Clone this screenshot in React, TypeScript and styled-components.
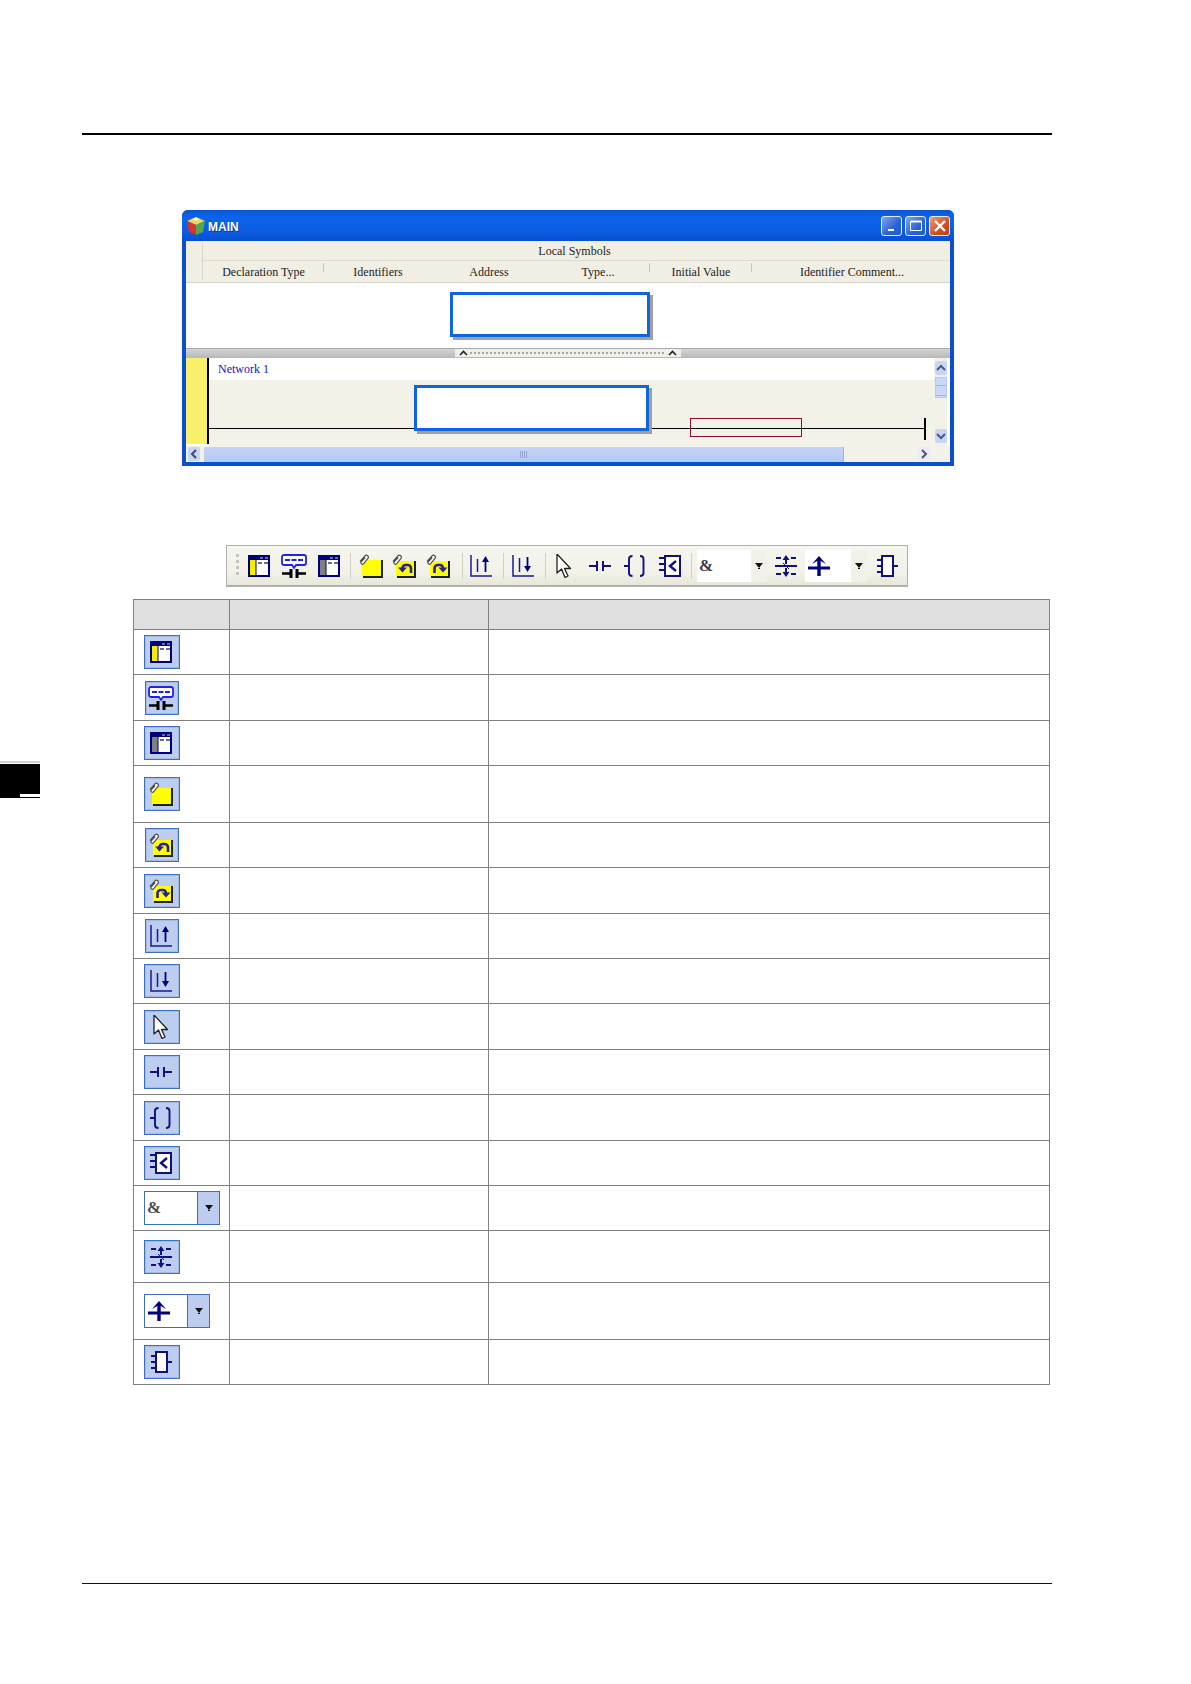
import React from "react";
import styled, { createGlobalStyle } from "styled-components";

const Global = createGlobalStyle`
  html, body { margin: 0; padding: 0; background: #fff; }
  body { font-family: "Liberation Serif", serif; }
`;

const Page = styled.div`
  position: relative;
  width: 1191px;
  height: 1684px;
  padding-top: 133px;
  box-sizing: border-box;
  overflow: hidden;
  background: #fff;
`;
const TopRule = styled.div`
  height: 2px;
  width: 970px;
  margin-left: 82px;
  background: #000;
`;
const BottomRule = styled.div`
  height: 1px;
  width: 970px;
  margin: 198px 0 0 82px;
  background: #111;
`;
const SideTab = styled.div`
  position: absolute;
  left: 0;
  top: 761px;
  width: 40px;
  height: 37px;
  box-sizing: border-box;
  border-top: 2px solid #d2d2d2;
  background: linear-gradient(#fff, #fff) no-repeat 0 0 / 100% 1px, #000;
  &::after {
    content: "";
    position: absolute;
    left: 20px;
    top: 31px;
    width: 20px;
    height: 3px;
    background: #fff;
  }
`;

/* window */
const Window = styled.section`
  position: relative;
  width: 772px;
  height: 256px;
  margin: 75px 0 0 182px;
  box-sizing: border-box;
  padding: 0 4px 4px;
  border-radius: 6px 6px 0 0;
  background: #0a4fd0;
  display: flex;
  flex-direction: column;
`;
const TitleBar = styled.div`
  height: 31px;
  margin: 0 -4px;
  padding: 0 4px 0 4px;
  flex: none;
  display: flex;
  align-items: center;
  gap: 2px;
  border-radius: 6px 6px 0 0;
  background: linear-gradient(#0a55d8 0, #0c64ea 25%, #0a5ce2 70%, #0650d0 100%);
`;
const TitleText = styled.span`
  flex: 1;
  padding-top: 2px;
  font: bold 12px "Liberation Sans", sans-serif;
  color: #fff;
  text-shadow: 1px 1px 0 #0a3a9c;
`;
const CapButton = styled.span<{ $close?: boolean }>`
  width: 21px;
  height: 20px;
  box-sizing: border-box;
  margin-left: 1px;
  display: flex;
  align-items: center;
  justify-content: center;
  border: 1px solid #e4ecfa;
  border-radius: 3px;
  background: ${(p) => (p.$close ? "linear-gradient(135deg,#e8a080,#d0501f 60%,#b8401a)" : "linear-gradient(135deg,#7fa8ee,#2a62d8 60%,#2358c8)")};
`;
const Header = styled.div`
  height: 42px;
  flex: none;
  background: #f1efe4;
  border-bottom: 1px solid #d4d2c8;
  box-sizing: border-box;
  display: grid;
  grid-template-rows: 20px 21px;
  padding-left: 17px;
  position: relative;
  &::before {
    content: "";
    position: absolute;
    left: 16px;
    top: 2px;
    bottom: 2px;
    width: 1px;
    background: #d8d6ca;
  }
`;
const SpanTitle = styled.div`
  display: flex;
  align-items: center;
  justify-content: center;
  padding: 2px 4px 0 0;
  font-size: 12px;
  color: #222;
  border-bottom: 1px solid #dedcd0;
`;
const Columns = styled.div`
  display: grid;
  grid-template-columns: 121px 108px 114px 104px 102px 190px;
`;
const Column = styled.div<{ $sep?: boolean; $shift?: number }>`
  display: flex;
  align-items: center;
  justify-content: center;
  padding-top: 2px;
  padding-left: ${(p) => p.$shift ?? 0}px;
  font-size: 12px;
  color: #222;
  position: relative;
  ${(p) =>
    p.$sep &&
    `&::after { content: ""; position: absolute; right: 0; top: 2px; height: 9px; width: 1px; background: #c9c7bb; }`}
`;
const UpperPane = styled.div`
  height: 65px;
  flex: none;
  background: #fff;
  border-bottom: 1px solid #a8a8a8;
`;
const Splitter = styled.div`
  height: 9px;
  flex: none;
  background: linear-gradient(#d4d4d4, #b8b8b8);
  padding-left: 269px;
`;
const SplitGrip = styled.div`
  width: 226px;
  height: 8px;
  background: #f0efe8;
  display: flex;
  align-items: center;
  justify-content: space-between;
  padding: 0 4px;
  box-sizing: border-box;
`;
const GripDots = styled.div`
  flex: 1;
  height: 2px;
  margin: 0 2px;
  background: repeating-linear-gradient(90deg, #a6a6a0 0 2px, transparent 2px 4px);
`;
const LowerPane = styled.div`
  height: 88px;
  flex: none;
  display: flex;
  background: #fff;
`;
const Gutter = styled.div`
  width: 21px;
  flex: none;
  background: #f8f06a;
  border-right: 2px solid #000;
  margin-bottom: 2px;
`;
const Ladder = styled.div`
  flex: 1;
  display: flex;
  flex-direction: column;
`;
const NetworkLabel = styled.div`
  height: 22px;
  flex: none;
  padding: 1px 0 0 9px;
  box-sizing: border-box;
  font-size: 12px;
  line-height: 21px;
  color: #1a10c0;
`;
const LadderBody = styled.div`
  flex: 1;
  background: #f3f2e9;
  position: relative;
`;
const Rung = styled.div`
  position: absolute;
  left: 0;
  top: 48px;
  width: 717px;
  height: 1px;
  background: #000;
  &::after {
    content: "";
    position: absolute;
    right: 0;
    top: -10px;
    width: 2px;
    height: 22px;
    background: #000;
  }
`;
const VScroll = styled.div`
  width: 13px;
  flex: none;
  margin-right: 3px;
  padding: 3px 0;
  background: #f3f2e9;
  display: flex;
  flex-direction: column;
  align-items: center;
`;
const ScrollBtn = styled.div<{ $plain?: boolean }>`
  width: 12px;
  height: 14px;
  display: flex;
  align-items: center;
  justify-content: center;
  background: ${(p) => (p.$plain ? "#ecebf0" : "#c6d6f4")};
  border-radius: 2px;
`;
const VThumb = styled.div`
  width: 12px;
  height: 21px;
  margin-top: 2px;
  box-sizing: border-box;
  border: 1px solid #b8caf0;
  background: repeating-linear-gradient(#c9d8f6 0 7px, #a0b4dc 7px 8px, #c9d8f6 8px 10px);
`;
const VSpace = styled.div`
  flex: 1;
`;
const HScroll = styled.div`
  flex: 1;
  display: flex;
  align-items: center;
  background: #f3f2e9;
  padding: 0 14px 0 2px;
`;
const HThumb = styled.div`
  width: 639px;
  height: 15px;
  margin: 0 74px 0 4px;
  background: linear-gradient(#c4d5f6, #b4c9f2);
  border-right: 1px solid #9fb4dc;
  display: flex;
  align-items: center;
  justify-content: center;
`;
const ThumbTicks = styled.span`
  width: 8px;
  height: 7px;
  background: repeating-linear-gradient(90deg, #8ea4cf 0 1px, transparent 1px 2px);
`;
const BlankBox = styled.div<{ $left: number; $top: number; $w: number; $h: number }>`
  position: absolute;
  left: ${(p) => p.$left}px;
  top: ${(p) => p.$top}px;
  width: ${(p) => p.$w}px;
  height: ${(p) => p.$h}px;
  box-sizing: border-box;
  border: 3px solid #0d66e0;
  background: #fff;
  box-shadow: 3px 3px 0 #a0a0a0;
`;
const RedFrame = styled.div`
  position: absolute;
  left: 508px;
  top: 208px;
  width: 112px;
  height: 19px;
  box-sizing: border-box;
  border: 1px solid #8e1028;
`;

/* toolbar */
const Toolbar = styled.div`
  width: 682px;
  height: 42px;
  margin: 79px 0 0 226px;
  box-sizing: border-box;
  border: 1px solid #b0b0b0;
  border-bottom-width: 2px;
  padding-left: 9px;
  background: linear-gradient(#f6f6f0, #f1f1e8 70%, #e6e6da);
  display: flex;
  align-items: center;
`;
const Grip = styled.div`
  width: 3px;
  height: 24px;
  background: repeating-linear-gradient(#c4c4bc 0 3px, transparent 3px 6px);
`;
const Tool = styled.span<{ $ml: number }>`
  width: 24px;
  height: 24px;
  flex: none;
  margin-left: ${(p) => p.$ml}px;
  display: flex;
  justify-content: center;
`;
const Sep = styled.span<{ $ml: number }>`
  width: 1px;
  height: 26px;
  flex: none;
  margin-left: ${(p) => p.$ml}px;
  background: #d0d0c6;
`;
const BarCombo = styled.div<{ $ml: number; $w: number }>`
  width: ${(p) => p.$w}px;
  height: 32px;
  flex: none;
  margin-left: ${(p) => p.$ml}px;
  display: flex;
  align-items: center;
  background: #fff;
`;
const ComboValue = styled.span`
  flex: 1;
  display: flex;
  align-items: center;
  padding-left: 2px;
  font: bold 17px "Liberation Serif", serif;
  color: #3c3c50;
`;
const BarArrow = styled.span`
  width: 16px;
  height: 100%;
  display: flex;
  align-items: center;
  justify-content: center;
  background: #f1f1e8;
`;

/* table */
const Table = styled.table`
  width: 916px;
  margin: 12px 0 0 133px;
  border-collapse: collapse;
  table-layout: fixed;
`;
const HeadCell = styled.th<{ $w: number }>`
  width: ${(p) => p.$w}px;
  height: 30px;
  padding: 0;
  box-sizing: border-box;
  background: #e0e0e0;
  border: 1px solid #808080;
`;
const Row = styled.tr<{ $h: number }>`
  height: ${(p) => p.$h}px;
`;
const Cell = styled.td`
  padding: 0;
  box-sizing: border-box;
  border: 1px solid #808080;
  vertical-align: middle;
`;
const IconCell = styled(Cell)`
  padding-left: 10px;
`;
const IconButton = styled.div<{ $narrow?: boolean }>`
  width: ${(p) => (p.$narrow ? 34 : 36)}px;
  height: 34px;
  margin-left: ${(p) => (p.$narrow ? 1 : 0)}px;
  padding-right: 2px;
  box-sizing: border-box;
  border: 1px solid #3d6fbe;
  box-shadow: inset 0 0 0 1px #a4bbe6;
  background: #bccdef;
  display: flex;
  align-items: center;
  justify-content: center;
`;
const TableCombo = styled.div<{ $w: number; $text: number }>`
  width: ${(p) => p.$w}px;
  height: 34px;
  box-sizing: border-box;
  border: 1px solid #3d6fbe;
  background: #bccdef;
  display: grid;
  grid-template-columns: ${(p) => p.$text}px 1fr;
`;
const TableComboValue = styled.span`
  display: flex;
  align-items: center;
  padding-left: 2px;
  background: #fff;
  border-right: 1px solid #3d6fbe;
  font: bold 17px "Liberation Serif", serif;
  color: #4a4a50;
`;
const TableArrow = styled.span`
  display: flex;
  align-items: center;
  justify-content: center;
`;

const NAVY = "#00007e";

const Svg = ({ children, size = 24 }: { children: React.ReactNode; size?: number }) => (
  <svg width={size} height="24" viewBox={`0 0 ${size} 24`} fill="none" style={{ flex: "none" }}>{children}</svg>
);

const Pane = ({ side }: { side: string }) => (
  <Svg>
    <rect x="2" y="2" width="20" height="20" fill="#fff" stroke={NAVY} strokeWidth="2" />
    <rect x="2" y="2" width="20" height="4" fill={NAVY} />
    <rect x="3" y="6" width="6" height="15" fill={side} />
    <path d="M9 6v15" stroke={NAVY} />
    <path d="M11 9h4M17 9h4" stroke="#6a6a9a" strokeWidth="2" />
    <path d="M13 4h3M18 4h3" stroke="#cfd4ee" />
  </Svg>
);
const Monitor = () => (
  <Svg size={26}>
    <path d="M3 1h20a2 2 0 0 1 2 2v6a2 2 0 0 1-2 2h-8l-2 3-2-3H3a2 2 0 0 1-2-2V3a2 2 0 0 1 2-2z" fill="#fff" stroke="#2222e6" strokeWidth="1.800" />
    <path d="M4 6h5M10.500 6h5M17 6h5" stroke="#2222e6" strokeWidth="2" />
    <path d="M1 19.500h8M17 19.500h8" stroke="#000" strokeWidth="2.400" />
    <path d="M10 15v9M16 15v9" stroke="#000" strokeWidth="3" />
  </Svg>
);
const Clip = () => (
  <path d="M1 7.500 6 1.800a2 2 0 0 1 3 2.600L4.500 9.800a1.500 1.500 0 0 1-2.300-1.900L6.200 3.500" stroke="#4e4e4e" strokeWidth="1.200" fill="#fff" />
);
const Note = () => (
  <Svg>
    <path d="M7 6h16v16H3V10z" fill="#ffff00" />
    <path d="M23 6v17H4" stroke="#202020" strokeWidth="2" />
    <Clip />
  </Svg>
);
const NoteUndo = () => (
  <Svg>
    <path d="M8 7h15v15H4V11z" fill="#ffff00" />
    <path d="M23 7v16H5" stroke="#202020" strokeWidth="2" />
    <Clip />
    <path d="M10.500 16.500V14a3 3 0 0 1 3-3h2a3.500 3.500 0 0 1 3.500 3.500V19" stroke="#26209a" strokeWidth="2.600" />
    <path d="M6 13.500 10.500 18.500l4.500-5z" fill="#26209a" />
  </Svg>
);
const NoteRedo = () => (
  <Svg>
    <path d="M8 7h15v15H4V11z" fill="#ffff00" />
    <path d="M23 7v16H5" stroke="#202020" strokeWidth="2" />
    <Clip />
    <path d="M8.500 19v-4.500A3.500 3.500 0 0 1 12 11h2a3 3 0 0 1 3 3v2.500" stroke="#26209a" strokeWidth="2.600" />
    <path d="M12.500 13.500 17 18.500l4.500-5z" fill="#26209a" />
  </Svg>
);
const Up = () => (
  <Svg>
    <path d="M2 1v21h21M8.500 5v13" stroke="#1a1a96" strokeWidth="1.500" />
    <path d="M16.500 7v11" stroke={NAVY} strokeWidth="1.800" />
    <path d="M13 8l3.500-6 3.500 6z" fill={NAVY} />
  </Svg>
);
const Down = () => (
  <Svg>
    <path d="M2 1v21h21M8.500 4v14" stroke="#1a1a96" strokeWidth="1.500" />
    <path d="M16.500 3v10" stroke={NAVY} strokeWidth="1.800" />
    <path d="M13 12l3.500 6 3.500-6z" fill={NAVY} />
  </Svg>
);
const Cursor = () => (
  <Svg>
    <path d="M5 0v19l4.500-4 3.500 8.500 3-1.500-3.500-7.500h6z" fill="#fff" stroke="#222" strokeWidth="1.300" strokeLinejoin="round" />
  </Svg>
);
const Contact = () => (
  <Svg>
    <path d="M1 12h8M15 12h8" stroke="#10107e" strokeWidth="2" />
    <path d="M9 7v10M15 7v10" stroke="#10107e" strokeWidth="2" />
  </Svg>
);
const Coil = () => (
  <Svg>
    <path d="M1 12h5M9.500 2C7 2 6 3 6 5v14c0 2 1 3 3.500 3M17 2c2.500 0 3.500 1 3.500 3v14c0 2-1 3-3.500 3" stroke="#10107e" strokeWidth="1.900" />
  </Svg>
);
const FuncBlock = () => (
  <Svg>
    <path d="M7 2h15v20H7z" fill="#fff" stroke="#10107e" strokeWidth="2" />
    <path d="M1 4h6M1 10h6M1 16h6" stroke="#10107e" strokeWidth="2" />
    <path d="M18 7l-6 5 6 5" stroke="#10107e" strokeWidth="2.400" />
  </Svg>
);
const Branch = () => (
  <Svg>
    <path d="M2 4h5M17 4h5M2 20h5M17 20h5M1 12h22" stroke="#10107e" strokeWidth="1.800" />
    <path d="M12 3v7M12 14v7" stroke="#10107e" strokeWidth="2" />
    <path d="M8.500 6 12 1l3.500 5zM8.500 18l3.500 5 3.500-5z" fill="#10107e" />
    <path d="M9 9l6 6" stroke="#10107e" strokeWidth="1" />
  </Svg>
);
const Tee = () => (
  <Svg>
    <path d="M1 14h22" stroke="#00007e" strokeWidth="3" />
    <path d="M12 5v17" stroke="#00007e" strokeWidth="3.400" />
    <path d="M5 10l7-8 7 8-7-4z" fill="#00007e" />
  </Svg>
);
const BlockIcon = () => (
  <Svg>
    <path d="M7 2h11v20H7z" fill="#fff" stroke="#10107e" strokeWidth="2" />
    <path d="M2 6h5M2 12h5M2 18h5M18 12h5" stroke="#10107e" strokeWidth="2" />
  </Svg>
);
const DropArrow = () => (
  <svg width="10" height="6" viewBox="0 0 10 6"><path d="M1 0h8L5 5z" fill="#111" /><path d="M4 5h2v1H4z" fill="#111" /></svg>
);
const Cube = () => (
  <svg width="20" height="20" viewBox="0 0 20 20">
    <path d="M1 5l9-4 9 4-9 4z" fill="#e6d85a" />
    <path d="M1 5l9 4v10l-7-3z" fill="#d8342c" />
    <path d="M19 5l-9 4v10l7-3z" fill="#57a64e" />
    <path d="M6 3.200 10 1.500l4 1.700L10 5z" fill="#fff6b0" />
  </svg>
);
const Caret = () => (
  <svg width="9" height="6" viewBox="0 0 9 6"><path d="M1 5l3.500-3.500L8 5" stroke="#222" strokeWidth="1.600" fill="none" /></svg>
);
const Chevron = ({ d, c }: { d: string; c: string }) => (
  <svg width="10" height="10" viewBox="0 0 10 10"><path d={d} stroke={c} strokeWidth="2" fill="none" /></svg>
);

type RowDef = { h: number; icon?: React.ReactNode; narrow?: boolean; combo?: { w: number; text: number; value: React.ReactNode } };

const rows: RowDef[] = [
  { h: 45, icon: <Pane side="#f6ee00" /> },
  { h: 46, icon: <Monitor />, narrow: true },
  { h: 45, icon: <Pane side="#808080" /> },
  { h: 57, icon: <Note /> },
  { h: 45, icon: <NoteUndo />, narrow: true },
  { h: 46, icon: <NoteRedo /> },
  { h: 45, icon: <Up />, narrow: true },
  { h: 45, icon: <Down /> },
  { h: 46, icon: <Cursor /> },
  { h: 45, icon: <Contact /> },
  { h: 46, icon: <Coil /> },
  { h: 45, icon: <FuncBlock /> },
  { h: 45, combo: { w: 76, text: 53, value: "&" } },
  { h: 52, icon: <Branch /> },
  { h: 57, combo: { w: 66, text: 43, value: <Tee /> } },
  { h: 45, icon: <BlockIcon /> },
];

export default function App() {
  return (
    <Page>
      <Global />
      <TopRule />
      <SideTab />
      <Window>
        <TitleBar>
          <Cube />
          <TitleText>MAIN</TitleText>
          <CapButton>
            <svg width="10" height="12" viewBox="0 0 10 12"><path d="M1 9h6v2H1z" fill="#fff" /></svg>
          </CapButton>
          <CapButton>
            <svg width="14" height="14" viewBox="0 0 14 14"><path d="M1.500 2.500h11v9h-11z" stroke="#fff" fill="none" /><path d="M1.500 2.500h11" stroke="#fff" strokeWidth="2" /></svg>
          </CapButton>
          <CapButton $close>
            <svg width="14" height="14" viewBox="0 0 14 14"><path d="M2 2l10 10M12 2 2 12" stroke="#fff" strokeWidth="2.400" /></svg>
          </CapButton>
        </TitleBar>
        <Header>
          <SpanTitle>Local Symbols</SpanTitle>
          <Columns>
            <Column $sep>Declaration Type</Column>
            <Column>Identifiers</Column>
            <Column>Address</Column>
            <Column $sep>Type...</Column>
            <Column $sep>Initial Value</Column>
            <Column $shift={10}>Identifier Comment...</Column>
          </Columns>
        </Header>
        <UpperPane />
        <Splitter>
          <SplitGrip>
            <Caret />
            <GripDots />
            <Caret />
          </SplitGrip>
        </Splitter>
        <LowerPane>
          <Gutter />
          <Ladder>
            <NetworkLabel>Network 1</NetworkLabel>
            <LadderBody>
              <Rung />
            </LadderBody>
          </Ladder>
          <VScroll>
            <ScrollBtn><Chevron d="M1 7l4-4 4 4" c="#4a5a8a" /></ScrollBtn>
            <VThumb />
            <VSpace />
            <ScrollBtn><Chevron d="M1 3l4 4 4-4" c="#4a5a8a" /></ScrollBtn>
          </VScroll>
        </LowerPane>
        <HScroll>
          <ScrollBtn><Chevron d="M7 1 3 5l4 4" c="#3a4a7a" /></ScrollBtn>
          <HThumb><ThumbTicks /></HThumb>
          <ScrollBtn $plain><Chevron d="M3 1l4 4-4 4" c="#5a4a8a" /></ScrollBtn>
        </HScroll>
        <BlankBox $left={268} $top={82} $w={200} $h={45} />
        <BlankBox $left={232} $top={175} $w={235} $h={46} />
        <RedFrame />
      </Window>

      <Toolbar>
        <Grip />
        <Tool $ml={8}><Pane side="#f6ee00" /></Tool>
        <Tool $ml={11}><Monitor /></Tool>
        <Tool $ml={11}><Pane side="#808080" /></Tool>
        <Sep $ml={9} />
        <Tool $ml={8}><Note /></Tool>
        <Tool $ml={9}><NoteUndo /></Tool>
        <Tool $ml={10}><NoteRedo /></Tool>
        <Sep $ml={12} />
        <Tool $ml={6}><Up /></Tool>
        <Sep $ml={10} />
        <Tool $ml={7}><Down /></Tool>
        <Sep $ml={10} />
        <Tool $ml={6}><Cursor /></Tool>
        <Tool $ml={12}><Contact /></Tool>
        <Tool $ml={11}><Coil /></Tool>
        <Tool $ml={11}><FuncBlock /></Tool>
        <Sep $ml={9} />
        <BarCombo $ml={5} $w={70}>
          <ComboValue>&amp;</ComboValue>
          <BarArrow><DropArrow /></BarArrow>
        </BarCombo>
        <Tool $ml={7}><Branch /></Tool>
        <BarCombo $ml={7} $w={62}>
          <ComboValue><Tee /></ComboValue>
          <BarArrow><DropArrow /></BarArrow>
        </BarCombo>
        <Tool $ml={8}><BlockIcon /></Tool>
      </Toolbar>

      <Table>
        <thead>
          <tr>
            <HeadCell $w={96} />
            <HeadCell $w={259} />
            <HeadCell $w={561} />
          </tr>
        </thead>
        <tbody>
          {rows.map((r, i) => (
            <Row key={i} $h={r.h}>
              <IconCell>
                {r.combo ? (
                  <TableCombo $w={r.combo.w} $text={r.combo.text}>
                    <TableComboValue>{r.combo.value}</TableComboValue>
                    <TableArrow><DropArrow /></TableArrow>
                  </TableCombo>
                ) : (
                  <IconButton $narrow={r.narrow}>{r.icon}</IconButton>
                )}
              </IconCell>
              <Cell />
              <Cell />
            </Row>
          ))}
        </tbody>
      </Table>
      <BottomRule />
    </Page>
  );
}
